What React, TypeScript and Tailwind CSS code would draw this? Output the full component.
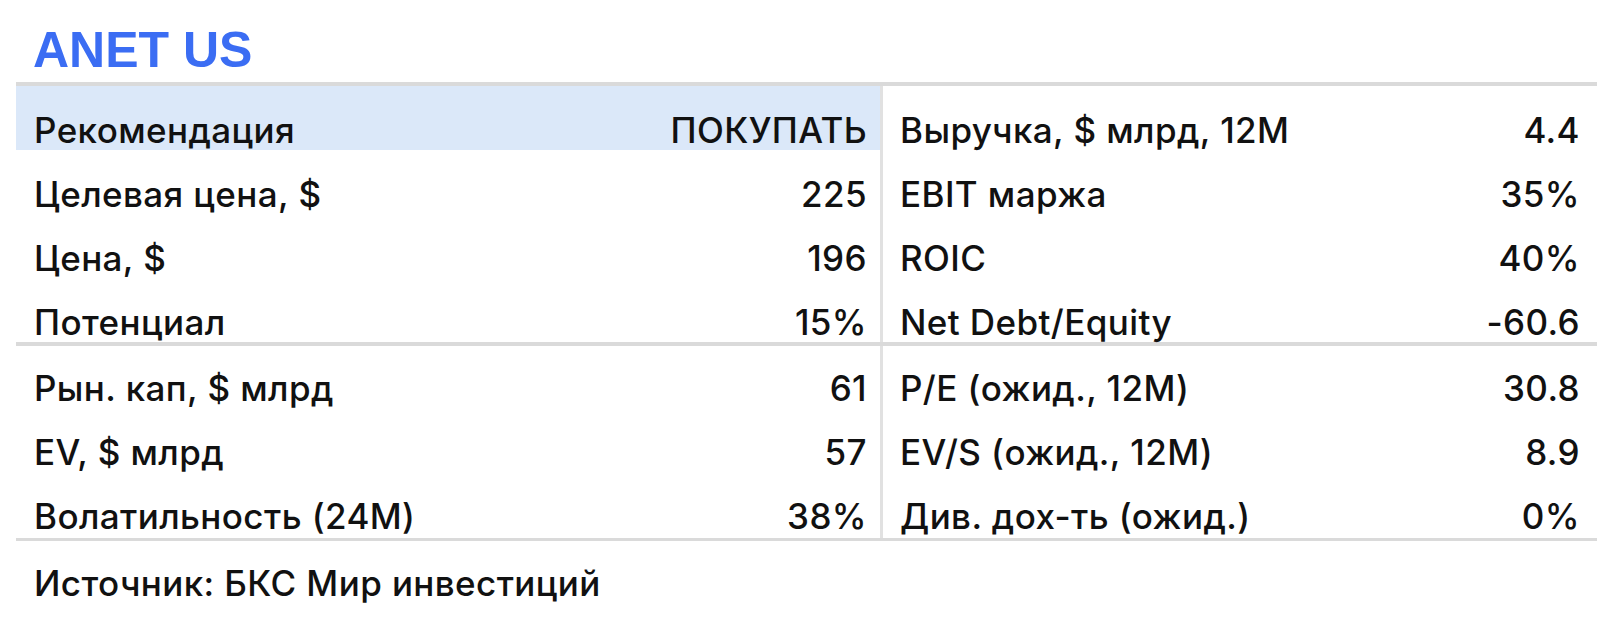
import React from "react";

type Row = [string, string, string, string];

const top: Row[] = [
  ["Целевая цена, $", "225", "EBIT маржа", "35%"],
  ["Цена, $", "196", "ROIC", "40%"],
  ["Потенциал", "15%", "Net Debt/Equity", "-60.6"],
];

const bottom: Row[] = [
  ["Рын. кап, $ млрд", "61", "P/E (ожид., 12M)", "30.8"],
  ["EV, $ млрд", "57", "EV/S (ожид., 12M)", "8.9"],
  ["Волатильность (24M)", "38%", "Див. дох-ть (ожид.)", "0%"],
];

function Cells({ row, highlight, pb }: { row: Row; highlight?: boolean; pb: string }) {
  return (
    <div className="flex h-[64px]">
      <div
        className={`flex w-[864px] items-end justify-between pl-[18px] pr-[13px] ${pb} ${
          highlight ? "bg-[#dbe8f9]" : ""
        }`}
      >
        <span>{row[0]}</span>
        <span>{row[1]}</span>
      </div>
      <div className="w-[3px] bg-[#e1e1e1]" />
      <div className={`flex flex-1 items-end justify-between pl-[17px] pr-[17px] ${pb}`}>
        <span>{row[2]}</span>
        <span>{row[3]}</span>
      </div>
    </div>
  );
}

export default function App() {
  return (
    <div
      className="w-[1613px] h-[637px] bg-white px-[16px] text-[#111111]"
      style={{ fontFamily: "Inter, 'Liberation Sans', Arial, sans-serif" }}
    >
      <div className="flex h-[82px] items-end pb-[8px] pl-[17px]">
        <span
          className="text-[50px] leading-[48px] font-bold text-[#3b6df3]"
          style={{ fontFamily: "'Liberation Sans', Arial, sans-serif" }}
        >
          ANET US
        </span>
      </div>
      <div className="h-[4px] bg-[#dadada]" />
      <div className="text-[35px] leading-[40px] font-medium tracking-[0.4px]">
        <Cells row={["Рекомендация", "ПОКУПАТЬ", "Выручка, $ млрд, 12M", "4.4"]} highlight pb="pb-0" />
        {top.map((r) => (
          <Cells key={r[0]} row={r} pb="pb-0" />
        ))}
        <div className="h-[4px] bg-[#dadada]" />
        {bottom.map((r) => (
          <Cells key={r[0]} row={r} pb="pb-[2px]" />
        ))}
        <div className="h-[3px] bg-[#dadada]" />
        <div className="flex h-[62px] items-end pl-[18px]">
          <span>Источник: БКС Мир инвестиций</span>
        </div>
      </div>
    </div>
  );
}
